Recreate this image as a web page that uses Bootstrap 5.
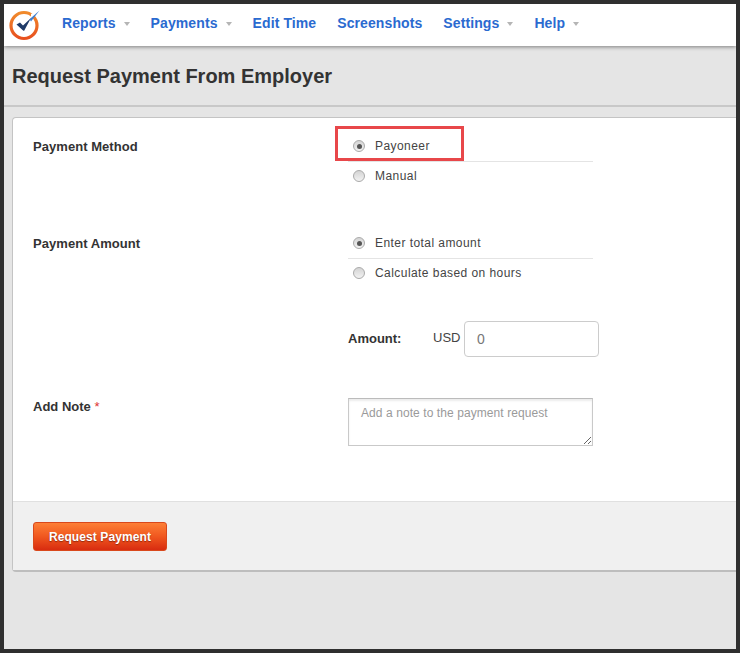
<!DOCTYPE html>
<html lang="en">
<head>
<meta charset="utf-8">
<title>Request Payment</title>
<link rel="stylesheet" href="https://cdn.jsdelivr.net/npm/bootstrap@5.3.0/dist/css/bootstrap.min.css">
<style>
html,body{height:100%;margin:0;overflow:hidden}
body{font-family:"Liberation Sans",Arial,sans-serif;font-size:12px;color:#333;background:#e5e5e5}
.frame{width:740px;height:653px;border:4px solid #2f2f2f;background:#e5e5e5;overflow:hidden}
.topbar{height:42px;background:#fff;box-shadow:0 1px 4px rgba(0,0,0,.45);position:relative;z-index:1;padding-left:5px}
.brand{width:31px;height:31px;margin-right:22px;flex:none}
.topnav{gap:21px;margin-top:-4px}
.toplink{font-size:14px;font-weight:700;color:#2a6ad0;letter-spacing:.1px;text-decoration:none;display:flex;align-items:center}
.caret-mark{width:0;height:0;border:3.5px solid transparent;border-top:4px solid #b5b5b5;border-bottom:0;margin-left:8px;margin-top:2px}
.titlebar{height:61px;padding:0 8px;border-bottom:2px solid #c8c8c8;margin-bottom:10px}
.titlebar h1{font-size:20px;font-weight:700;color:#333;margin:0;line-height:60px}
.panel{margin-left:8px;width:740px;height:455px;background:#fff;border:1px solid #c4c4c4;border-bottom:2px solid #bdbdbd;border-radius:4px;display:flex;flex-direction:column}
.panel-main{flex:1;padding:0 20px;position:relative}
.panel-foot{height:69px;background:#f0f0f0;border-top:1px solid #e0e0e0;padding:20px 20px 0}
.form-line{display:flex}
.lab{width:315px;font-size:13px;font-weight:700;color:#333;flex:none;letter-spacing:.05px}
.lab-offset{padding-top:5px}
.lab-note{margin-top:-1px;letter-spacing:0}
.req{color:#d33;font-weight:400}
.choices{width:245px;margin-left:0}
.choice{display:flex;align-items:center;height:29px;font-size:12px;color:#444;letter-spacing:.44px;padding-left:5px;padding-bottom:1px}
.choice+.choice{border-top:1px solid #e4e4e4}
.dot{width:12px;height:12px;border-radius:50%;border:1px solid #aaa;background:linear-gradient(#d4d4d4,#f2f2f2);margin-right:10px;flex:none;position:relative}
.dot.on::after{content:"";position:absolute;left:2.5px;top:2.5px;width:5px;height:5px;border-radius:50%;background:#555}
.flag-box{position:absolute;left:322px;top:8px;width:129px;height:35px;border:3px solid #e8474a;pointer-events:none}
.amt{font-size:13px;font-weight:700;color:#333;width:85px;flex:none}
.cur{font-size:13px;color:#444;width:31px;flex:none;margin-top:-2px}
.amt-input{width:135px;height:36px;border:1px solid #ccc;border-radius:4px;padding:0 12px;font-size:14px;color:#777;font-family:inherit;background:#fff}
.note{width:245px;height:48px;border:1px solid #c9c9c9;border-top-color:#bbb;box-shadow:inset 0 2px 2px rgba(0,0,0,.08);padding:5px 12px;font-size:12px;font-family:inherit;color:#555;letter-spacing:.08px;border-radius:0;display:block}
.note::placeholder{color:#9a9a9a;opacity:1}
.row-method{padding-top:14px}
.row-amount{margin-top:39px}
.row-usd{margin-top:34px;padding-left:315px;align-items:center}
.row-note{margin-top:41px}
.pay-btn{width:134px;height:29px;padding:0;border:1px solid #d9481c;border-radius:3px;background:linear-gradient(#fd7f36,#f0571f 50%,#d82c10);color:#fff;font-size:12px;font-weight:700;letter-spacing:.1px;text-shadow:0 1px 1px rgba(90,20,0,.6);font-family:inherit}
</style>
</head>
<body>
<div class="frame">
  <nav class="topbar d-flex align-items-center">
    <svg class="brand" viewBox="0 0 31 31" aria-label="Logo">
      <defs><linearGradient id="ringfill" x1="0" y1="0" x2="0" y2="1"><stop offset="0" stop-color="#f08a2c"/><stop offset="1" stop-color="#e8501e"/></linearGradient></defs>
      <circle cx="15" cy="15.5" r="13" fill="#fff" stroke="url(#ringfill)" stroke-width="3.2"/>
      <path d="M22 4 L31 0 L22 9Z" fill="#fff"/>
      <path d="M7.5 14.5 L11 12.5 L14 15.5 L22 8 L15 21 L13.5 20Z" fill="#1f3a68"/>
      <path d="M20.5 9.2 L30.5 0.5 L22 11.5Z" fill="#3f7fd0"/>
    </svg>
    <div class="topnav d-flex">
      <a class="toplink" href="#">Reports<span class="caret-mark"></span></a>
      <a class="toplink" href="#">Payments<span class="caret-mark"></span></a>
      <a class="toplink" href="#">Edit Time</a>
      <a class="toplink" href="#">Screenshots</a>
      <a class="toplink" href="#">Settings<span class="caret-mark"></span></a>
      <a class="toplink" href="#">Help<span class="caret-mark"></span></a>
    </div>
  </nav>
  <div class="titlebar"><h1>Request Payment From Employer</h1></div>
  <div class="panel">
    <div class="panel-main">
      <div class="flag-box"></div>
      <div class="form-line row-method">
        <div class="lab lab-offset">Payment Method</div>
        <div class="choices">
          <div class="choice"><span class="dot on"></span>Payoneer</div>
          <div class="choice"><span class="dot"></span>Manual</div>
        </div>
      </div>
      <div class="form-line row-amount">
        <div class="lab lab-offset">Payment Amount</div>
        <div class="choices">
          <div class="choice"><span class="dot on"></span>Enter total amount</div>
          <div class="choice"><span class="dot"></span>Calculate based on hours</div>
        </div>
      </div>
      <div class="form-line row-usd">
        <span class="amt">Amount:</span><span class="cur">USD</span>
        <input class="amt-input" type="text" value="0">
      </div>
      <div class="form-line row-note">
        <div class="lab lab-note">Add Note <span class="req">*</span></div>
        <textarea class="note" placeholder="Add a note to the payment request"></textarea>
      </div>
    </div>
    <div class="panel-foot"><button class="pay-btn" type="button">Request Payment</button></div>
  </div>
</div>
<script src="https://cdn.jsdelivr.net/npm/bootstrap@5.3.0/dist/js/bootstrap.bundle.min.js"></script>
</body>
</html>
